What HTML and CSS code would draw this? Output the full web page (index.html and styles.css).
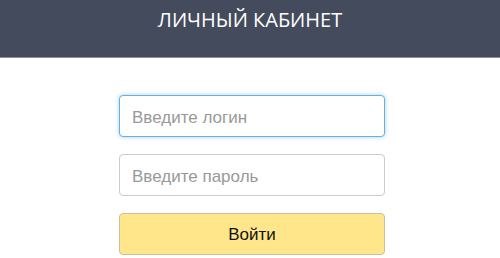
FILE: index.html
```html
<!DOCTYPE html>
<html>
  <head>
    <meta name="viewport" content="width=device-width, initial-scale=1" />
    <link rel="stylesheet" href="styles.css">
  </head>
  <body>
    <div class="header">ЛИЧНЫЙ КАБИНЕТ</div>

    <div class="container">
      <form class="login-form" action="/login">
        <input type="text" class="field field-focus" name="login" placeholder="Введите логин" />
        <input type="password" class="field" name="password" placeholder="Введите пароль" />
        <button type="submit" class="btn-enter">Войти</button>
      </form>
    </div>
  </body>
</html>
```

FILE: styles.css
```css
* {
  box-sizing: border-box;
}

body {
  margin: 0;
  background-color: #fff;
  font-family: "Liberation Sans", Tahoma, sans-serif;
}

.header {
  height: 58px;
  padding-top: 6px;
  background-color: #434b5c;
  border-bottom: 1px solid #8a8f99;
  color: #fff;
  font-family: "Open Sans", sans-serif;
  font-size: 20px;
  text-align: center;
}

.container {
  padding: 37px 0 0 4px;
}

.login-form {
  width: 266px;
  margin: 0 auto;
  display: flex;
  flex-direction: column;
  gap: 17px;
}

.field {
  width: 100%;
  height: 42px;
  padding: 3px 12px 0;
  border: 1px solid #ccc;
  border-radius: 4px;
  font-family: inherit;
  font-size: 17px;
  color: #555;
  outline: none;
}

.field::placeholder {
  color: #999;
}

.field-focus {
  border-color: #66afe9;
  box-shadow: 0 0 4px rgba(102, 175, 233, 0.6);
}

.btn-enter {
  height: 42px;
  padding-top: 2px;
  background-color: #ffe68a;
  border: 1px solid #c8c2a8;
  border-radius: 4px;
  font-family: inherit;
  font-size: 17px;
  color: #111;
  cursor: pointer;
}
```
